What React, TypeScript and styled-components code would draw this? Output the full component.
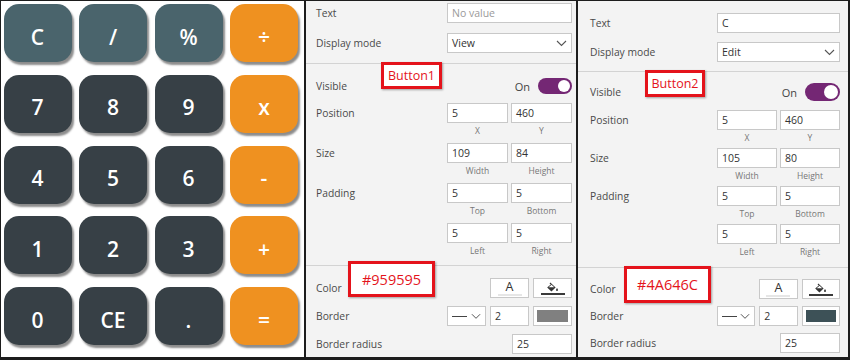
import React from "react";
import styled, { createGlobalStyle } from "styled-components";

const Global = createGlobalStyle`
  html, body { margin: 0; padding: 0; background: #fff; }
  body { width: 850px; height: 360px; overflow: hidden; }
  * { box-sizing: border-box; }
`;

const Frame = styled.div`
  width: 850px;
  height: 360px;
  padding: 1px 2px 3px 1px;
  background: #1d1d1d;
  display: flex;
  gap: 2px;
`;

/* ---------- calculator ---------- */

const Calc = styled.div`
  width: 303px;
  flex: none;
  background: #fff;
  display: grid;
  grid-template-columns: repeat(4, 68px);
  grid-template-rows: repeat(5, 58px);
  column-gap: 7.5px;
  row-gap: 12.75px;
  padding: 3px 0 0 2.5px;
  align-content: start;
`;

type Tone = "top" | "num" | "op";

const Key = styled.div<{ $tone: Tone }>`
  border-radius: 15px;
  background: ${(p) =>
    p.$tone === "top" ? "#4A646C" : p.$tone === "op" ? "#EF9120" : "#374046"};
  box-shadow: 2px 3px 2px rgba(0, 0, 0, 0.45);
  color: #fff;
  font-family: "Open Sans", "Noto Sans", sans-serif;
  font-weight: 600;
  font-size: 21px;
  display: flex;
  align-items: center;
  justify-content: center;
  padding-top: 7px;
`;

const keys: [string, Tone][] = [
  ["C", "top"], ["/", "top"], ["%", "top"], ["÷", "op"],
  ["7", "num"], ["8", "num"], ["9", "num"], ["x", "op"],
  ["4", "num"], ["5", "num"], ["6", "num"], ["-", "op"],
  ["1", "num"], ["2", "num"], ["3", "num"], ["+", "op"],
  ["0", "num"], ["CE", "num"], [".", "num"], ["=", "op"],
];

/* ---------- property panels ---------- */

const Panel = styled.div`
  position: relative;
  width: 270px;
  flex: none;
  background: #f3f3f3;
  display: flex;
  flex-direction: column;
  font-family: "Open Sans", "Noto Sans", sans-serif;
  color: #444;
`;

const Section = styled.div<{ $pt: number; $pb: number; $gap: number; $pl: number; $pr: number }>`
  display: flex;
  flex-direction: column;
  padding: ${(p) => p.$pt}px ${(p) => p.$pr}px ${(p) => p.$pb}px ${(p) => p.$pl}px;
  gap: ${(p) => p.$gap}px;
`;

const Divider = styled.div`
  height: 1px;
  flex: none;
  background: #d3d3d3;
`;

const Row = styled.div<{ $ctrl: number; $mb?: number }>`
  display: grid;
  grid-template-columns: 1fr ${(p) => p.$ctrl}px;
  align-items: start;
  margin-bottom: ${(p) => p.$mb ?? 0}px;
`;

const Label = styled.div<{ $h?: number }>`
  height: ${(p) => p.$h ?? 20}px;
  line-height: ${(p) => p.$h ?? 20}px;
  font-size: 10.3px;
  color: #4a4a4a;
  white-space: nowrap;
`;

const Box = styled.div<{ $muted?: boolean; $w?: number }>`
  height: 20px;
  width: ${(p) => (p.$w ? `${p.$w}px` : "auto")};
  border: 1px solid #c8c8c8;
  background: #fff;
  display: flex;
  align-items: center;
  justify-content: space-between;
  padding: 0 4px;
  font-size: 10.5px;
  color: ${(p) => (p.$muted ? "#9a9a9a" : "#333")};
  white-space: nowrap;
`;

const RightBox = styled(Box)`
  justify-self: end;
`;

const Stack = styled.div<{ $gap?: number }>`
  display: flex;
  flex-direction: column;
  gap: ${(p) => p.$gap ?? 0}px;
`;

const Pair = styled.div`
  display: grid;
  grid-template-columns: 1fr 1fr;
  gap: 3px;
`;

const Captions = styled.div`
  display: grid;
  grid-template-columns: 1fr 1fr;
  gap: 3px;
  height: 16px;
  line-height: 16px;
  font-size: 8.5px;
  color: #777;
  text-align: center;
`;

const Triple = styled.div`
  display: grid;
  grid-template-columns: 1fr 1fr 1fr;
  gap: 4px;
`;

const ToggleLine = styled.div<{ $h: number }>`
  height: ${(p) => p.$h}px;
  display: flex;
  align-items: center;
  justify-content: flex-end;
  gap: 8px;
  font-size: 11px;
  color: #444;
`;

const Toggle = styled.div<{ $w: number; $h: number }>`
  width: ${(p) => p.$w}px;
  height: ${(p) => p.$h}px;
  border-radius: ${(p) => p.$h / 2}px;
  background: #742774;
  display: flex;
  align-items: center;
  justify-content: flex-end;
  padding-right: 2px;
`;

const Knob = styled.div<{ $d: number }>`
  width: ${(p) => p.$d}px;
  height: ${(p) => p.$d}px;
  border-radius: 50%;
  background: #fff;
`;

const ColorBtn = styled.div`
  height: 20px;
  border: 1px solid #c8c8c8;
  background: #fff;
  display: flex;
  flex-direction: column;
  align-items: center;
  justify-content: center;
  gap: 1px;
  font-size: 12.5px;
  color: #333;
  line-height: 12px;
`;

const Bar = styled.div<{ $c: string }>`
  width: 24px;
  height: 2px;
  background: ${(p) => p.$c};
`;

const Swatch = styled.div`
  height: 20px;
  border: 1px solid #c8c8c8;
  background: #fff;
  padding: 3px 3px;
  display: flex;
`;

const SwatchFill = styled.div<{ $c: string }>`
  flex: 1;
  background: ${(p) => p.$c};
`;

const Dash = styled.div`
  width: 15px;
  height: 1px;
  background: #444;
`;

const Note = styled.div<{ $x: number; $y: number; $w: number; $h: number; $fs: number }>`
  position: absolute;
  left: ${(p) => p.$x}px;
  top: ${(p) => p.$y}px;
  width: ${(p) => p.$w}px;
  height: ${(p) => p.$h}px;
  border: 3px solid #e4131b;
  background: #fff;
  color: #e4131b;
  font-family: "Open Sans", "Noto Sans", sans-serif;
  font-size: ${(p) => p.$fs}px;
  display: flex;
  align-items: center;
  justify-content: center;
  box-shadow: 1px 1px 2px rgba(0, 0, 0, 0.35);
`;

const Chevron = ({ w = 11 }: { w?: number }) => (
  <svg width={w} height="7" viewBox="0 0 11 7">
    <path d="M1 1 L5.5 5.5 L10 1" fill="none" stroke="#555" strokeWidth="1.1" />
  </svg>
);

const Bucket = () => (
  <svg width="13" height="10" viewBox="0 0 13 10">
    <path d="M4 1 L5.2 2.2" stroke="#333" strokeWidth="1.2" />
    <path d="M1.2 5.4 L5.6 1.8 L9.6 5.6 L5.4 9.4 Z" fill="#333" />
    <path d="M2.6 5.2 L5.6 2.8 L8.2 5.2 Z" fill="#fff" />
    <path d="M11 6 C11 6 10 7.4 10 8.1 a1 1 0 0 0 2 0 C12 7.4 11 6 11 6 Z" fill="#333" />
  </svg>
);

type Sp = {
  top: number; gapA: number; visTop: number; visH: number; afterVis: number;
  fieldGap: number; preDiv: number; colorTop: number; bottomGap: number;
  pl: number; pr: number; ctrl: number; tw: number;
};

type Cfg = {
  text: string; muted: boolean; mode: string;
  pos: [string, string]; size: [string, string]; pad: [string, string, string, string];
  swatch: string;
  note1: { label: string; x: number; y: number; w: number; h: number };
  note2: { label: string; x: number; y: number; w: number; h: number };
  sp: Sp;
};

function PropsPanel({ c }: { c: Cfg }) {
  const s = c.sp;
  return (
    <Panel>
      <Section $pt={s.top} $pb={s.gapA} $gap={s.gapA} $pl={s.pl} $pr={s.pr}>
        <Row $ctrl={s.ctrl}>
          <Label>Text</Label>
          <Box $muted={c.muted}>{c.text}</Box>
        </Row>
        <Row $ctrl={s.ctrl}>
          <Label>Display mode</Label>
          <Box>
            {c.mode}
            <Chevron />
          </Box>
        </Row>
      </Section>
      <Divider />
      <Section $pt={s.visTop} $pb={s.preDiv} $gap={s.fieldGap} $pl={s.pl} $pr={s.pr}>
        <Row $ctrl={s.ctrl} $mb={s.afterVis - s.fieldGap}>
          <Label $h={s.visH}>Visible</Label>
          <ToggleLine $h={s.visH}>
            On
            <Toggle $w={s.tw} $h={s.visH}>
              <Knob $d={s.visH - 4} />
            </Toggle>
          </ToggleLine>
        </Row>
        <Row $ctrl={s.ctrl}>
          <Label>Position</Label>
          <Stack>
            <Pair>
              <Box>{c.pos[0]}</Box>
              <Box>{c.pos[1]}</Box>
            </Pair>
            <Captions>
              <span>X</span>
              <span>Y</span>
            </Captions>
          </Stack>
        </Row>
        <Row $ctrl={s.ctrl}>
          <Label>Size</Label>
          <Stack>
            <Pair>
              <Box>{c.size[0]}</Box>
              <Box>{c.size[1]}</Box>
            </Pair>
            <Captions>
              <span>Width</span>
              <span>Height</span>
            </Captions>
          </Stack>
        </Row>
        <Row $ctrl={s.ctrl}>
          <Label>Padding</Label>
          <Stack $gap={s.fieldGap}>
            <Stack>
              <Pair>
                <Box>{c.pad[0]}</Box>
                <Box>{c.pad[1]}</Box>
              </Pair>
              <Captions>
                <span>Top</span>
                <span>Bottom</span>
              </Captions>
            </Stack>
            <Stack>
              <Pair>
                <Box>{c.pad[2]}</Box>
                <Box>{c.pad[3]}</Box>
              </Pair>
              <Captions>
                <span>Left</span>
                <span>Right</span>
              </Captions>
            </Stack>
          </Stack>
        </Row>
      </Section>
      <Divider />
      <Section $pt={s.colorTop} $pb={0} $gap={s.bottomGap} $pl={s.pl} $pr={s.pr}>
        <Row $ctrl={s.ctrl}>
          <Label>Color</Label>
          <Triple>
            <span />
            <ColorBtn>
              A
              <Bar $c="#e6e6e6" />
            </ColorBtn>
            <ColorBtn>
              <Bucket />
              <Bar $c="#3a3a3a" />
            </ColorBtn>
          </Triple>
        </Row>
        <Row $ctrl={s.ctrl}>
          <Label>Border</Label>
          <Triple>
            <Box>
              <Dash />
              <Chevron w={10} />
            </Box>
            <Box>2</Box>
            <Swatch>
              <SwatchFill $c={c.swatch} />
            </Swatch>
          </Triple>
        </Row>
        <Row $ctrl={s.ctrl}>
          <Label>Border radius</Label>
          <RightBox $w={60}>25</RightBox>
        </Row>
      </Section>
      <Note $x={c.note1.x} $y={c.note1.y} $w={c.note1.w} $h={c.note1.h} $fs={12.5}>
        {c.note1.label}
      </Note>
      <Note $x={c.note2.x} $y={c.note2.y} $w={c.note2.w} $h={c.note2.h} $fs={14.5}>
        {c.note2.label}
      </Note>
    </Panel>
  );
}

const panel1: Cfg = {
  text: "No value",
  muted: true,
  mode: "View",
  pos: ["5", "460"],
  size: ["109", "84"],
  pad: ["5", "5", "5", "5"],
  swatch: "#808080",
  note1: { label: "Button1", x: 75, y: 61, w: 61, h: 27 },
  note2: { label: "#959595", x: 42, y: 260, w: 87, h: 36 },
  sp: {
    top: 2, gapA: 10, visTop: 14, visH: 16, afterVis: 9, fieldGap: 4,
    preDiv: 6, colorTop: 12, bottomGap: 8, pl: 10, pr: 4, ctrl: 125, tw: 34,
  },
};

const panel2: Cfg = {
  text: "C",
  muted: false,
  mode: "Edit",
  pos: ["5", "460"],
  size: ["105", "80"],
  pad: ["5", "5", "5", "5"],
  swatch: "#3d5157",
  note1: { label: "Button2", x: 67, y: 69, w: 60, h: 27 },
  note2: { label: "#4A646C", x: 46, y: 265, w: 87, h: 37 },
  sp: {
    top: 12, gapA: 9, visTop: 11, visH: 18, afterVis: 9, fieldGap: 2,
    preDiv: 7, colorTop: 11, bottomGap: 7, pl: 12, pr: 8, ctrl: 123, tw: 35,
  },
};

export default function App() {
  return (
    <>
      <Global />
      <Frame>
        <Calc>
          {keys.map(([k, t]) => (
            <Key key={k} $tone={t}>
              {k}
            </Key>
          ))}
        </Calc>
        <PropsPanel c={panel1} />
        <PropsPanel c={panel2} />
      </Frame>
    </>
  );
}
